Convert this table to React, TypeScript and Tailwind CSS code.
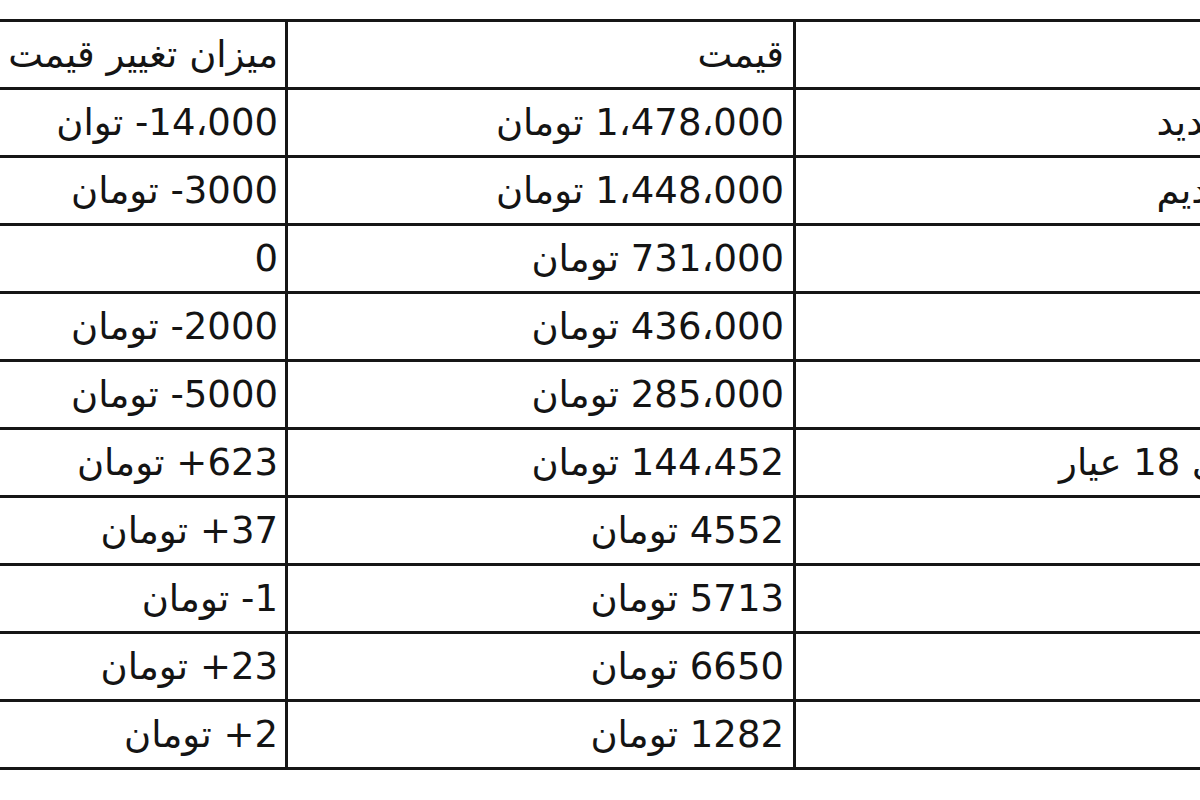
import React from "react";

const rows: [string, string, string][] = [
  ["سکه طرح جدید", "1،478،000 تومان", "14،000- توان"],
  ["سکه طرح قدیم", "1،448،000 تومان", "3000- تومان"],
  ["نیم سکه", "731،000 تومان", "0"],
  ["ربع سکه", "436،000 تومان", "2000- تومان"],
  ["سکه گرمی", "285،000 تومان", "5000- تومان"],
  ["هر گرم طلای 18 عیار", "144،452 تومان", "623+ تومان"],
  ["دلار", "4552 تومان", "37+ تومان"],
  ["یورو", "5713 تومان", "1- تومان"],
  ["پوند", "6650 تومان", "23+ تومان"],
  ["درهم", "1282 تومان", "2+ تومان"],
];

const all: [string, string, string][] = [["نوع", "قیمت", "میزان تغییر قیمت"], ...rows];

export default function App() {
  return (
    <div className="w-[1200px] h-[800px] overflow-hidden bg-white pt-[19px] flex justify-end font-['DejaVu_Sans',sans-serif] text-[37px] leading-[37px] text-[#141414]">
      <div dir="rtl" className="w-[1621px] shrink-0 mr-[-206px] flex flex-col self-start border-b-[3px] border-[#161616]">
        {all.map((r, i) => (
          <div key={i} className="flex h-[68px] border-t-[3px] border-[#161616]">
            <div className="w-[613px] shrink-0 border-l-[3px] border-[#161616] flex items-center pr-[9px] whitespace-nowrap overflow-hidden">
              {r[0]}
            </div>
            <div className="w-[508px] shrink-0 border-l-[3px] border-[#161616] flex items-center pr-[9px] whitespace-nowrap overflow-hidden">
              {r[1]}
            </div>
            <div className="w-[500px] shrink-0 flex items-center pr-[7px] whitespace-nowrap overflow-hidden">
              {r[2]}
            </div>
          </div>
        ))}
      </div>
    </div>
  );
}
